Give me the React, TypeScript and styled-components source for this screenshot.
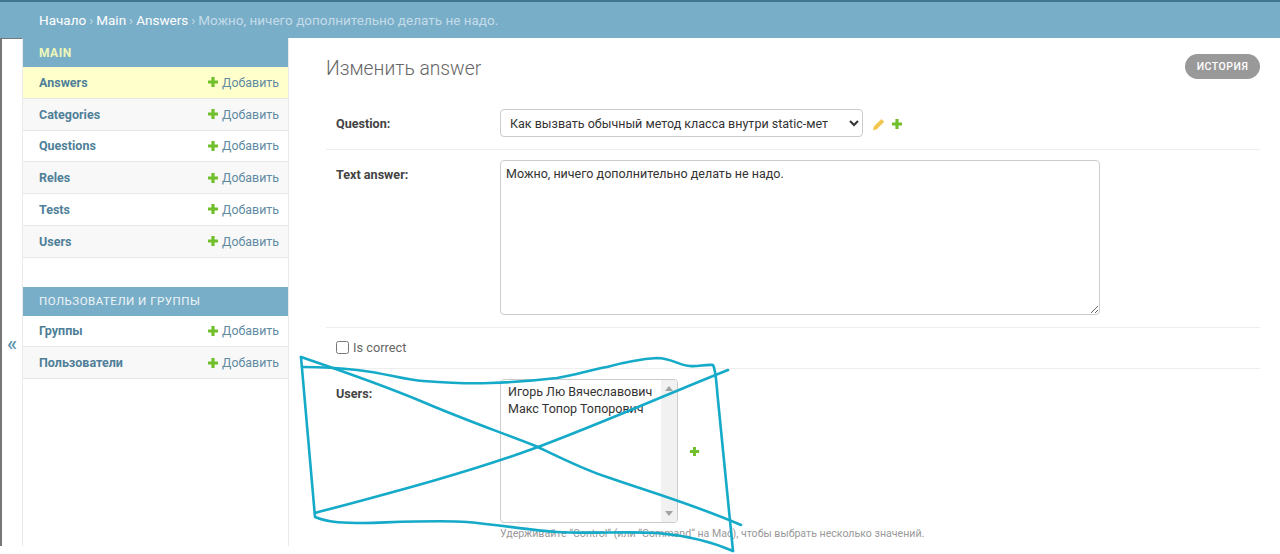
import styled, { createGlobalStyle } from "styled-components"

const GlobalStyle = createGlobalStyle`
  html, body {
    margin: 0;
    padding: 0;
    background: #fff;
    height: 554px;
    overflow: hidden;
  }

  body {
    font-family: Roboto, "Liberation Sans", sans-serif;
    font-size: 14px;
    color: #333;
  }

  * {
    box-sizing: border-box;
  }
`

const Page = styled.div`
  position: relative;
  width: 1280px;
  height: 554px;
  overflow: hidden;
`

const Breadcrumbs = styled.div`
  height: 38px;
  background: #79aec8;
  border-top: 2px solid #417690;
  padding: 0 39px;
  display: flex;
  align-items: center;
  font-size: 13.5px;
  color: #c4dce8;
  white-space: nowrap;

  a {
    color: #fff;
  }

  span {
    margin: 0 3px;
  }
`

const Body = styled.div`
  display: flex;
  height: 508px;
`

const Toggle = styled.div`
  width: 23px;
  flex-shrink: 0;
  border-left: 2px solid #777;
  border-right: 1px solid #eaeaea;
  border-top: 1px solid #777;
  display: flex;
  justify-content: center;
  color: #5d93ad;
  font-size: 21px;
  font-weight: 500;
  line-height: 24px;
  padding-top: 292px;
`

const Nav = styled.div`
  width: 266px;
  flex-shrink: 0;
  border-right: 1px solid #eaeaea;
`

const Module = styled.div`
  margin-bottom: 29px;
`

const Caption = styled.div<{ $highlight?: boolean }>`
  height: 29px;
  background: #79aec8;
  padding: 0 16px;
  display: flex;
  align-items: center;
  font-size: ${props => props.$highlight ? 12 : 11.5}px;
  font-weight: ${props => props.$highlight ? 700 : 400};
  letter-spacing: 0.5px;
  color: ${props => props.$highlight ? "#eef7b8" : "#eef5f8"};
`

const Row = styled.div<{ $bg: string }>`
  height: 31.75px;
  padding: 0 9px 0 16px;
  display: flex;
  align-items: center;
  justify-content: space-between;
  background: ${props => props.$bg};
  border-bottom: 1px solid #e8e8e8;
`

const ModelName = styled.span`
  font-size: 12.5px;
  font-weight: 700;
  color: #4f7f98;
`

const AddLink = styled.span`
  display: flex;
  align-items: center;
  gap: 3px;
  font-size: 12.4px;
  color: #5f8ba2;
`

const Main = styled.div`
  flex-grow: 1;
  padding: 0 20px 0 37px;
`

const TitleBar = styled.div`
  height: 61px;
  display: flex;
  align-items: center;
  justify-content: space-between;
`

const Title = styled.h1`
  margin: 0;
  font-size: 19.3px;
  font-weight: 300;
  color: #666;
`

const History = styled.div`
  width: 75px;
  height: 25px;
  margin-bottom: 4px;
  border-radius: 13px;
  background: #999;
  color: #fff;
  font-size: 10.5px;
  font-weight: 500;
  letter-spacing: 0.5px;
  display: flex;
  align-items: center;
  justify-content: center;
`

const FormRow = styled.div<{ $height: number }>`
  height: ${props => props.$height}px;
  padding: 10px 10px 0 10px;
  display: flex;
  border-bottom: 1px solid #eee;
`

const Label = styled.label`
  width: 164px;
  flex-shrink: 0;
  font-size: 12.6px;
  font-weight: 700;
  color: #444;
  padding-top: 7px;
`

const QuestionSelect = styled.select`
  width: 363px;
  height: 28px;
  border: 1px solid #ccc;
  border-radius: 4px;
  background: #fff;
  font-family: Roboto, sans-serif;
  font-size: 12.5px;
  color: #333;
  padding: 0 18px 0 5px;
`

const IconGroup = styled.div`
  display: flex;
  align-items: center;
  gap: 6px;
  margin-left: 9px;
  height: 30px;
`

const AnswerArea = styled.textarea`
  width: 600px;
  height: 155px;
  border: 1px solid #ccc;
  border-radius: 4px;
  padding: 5px 5px;
  font-family: Roboto, sans-serif;
  font-size: 12.5px;
  color: #333;
  resize: both;
  outline: none;
`

const CheckRow = styled.div`
  height: 41px;
  padding: 0 10px 2px;
  display: flex;
  align-items: center;
  gap: 4px;
  border-bottom: 1px solid #eee;
  font-size: 12.8px;
  color: #666;
`

const Check = styled.input`
  width: 13px;
  height: 13px;
  margin: 0;
`

const UsersRow = styled.div`
  padding: 10px 10px 0;
  display: flex;
`

const UsersField = styled.div`
  display: flex;
  flex-direction: column;
`

const UsersLine = styled.div`
  display: flex;
  align-items: center;
  gap: 11px;
`

const UserList = styled.div`
  width: 178px;
  height: 144px;
  border: 1px solid #ccc;
  border-radius: 4px;
  display: flex;
  justify-content: space-between;
  overflow: hidden;
`

const UserNames = styled.div`
  padding: 4px 7px;
  font-size: 12.5px;
  line-height: 16.5px;
  color: #333;
  white-space: nowrap;
`

const ScrollTrack = styled.div`
  width: 16px;
  background: #f1f1f1;
  display: flex;
  flex-direction: column;
  justify-content: space-between;
  align-items: center;
  padding: 6px 0;
`

const Arrow = styled.div<{ $down?: boolean }>`
  width: 0;
  height: 0;
  border-left: 4px solid transparent;
  border-right: 4px solid transparent;
  border-bottom: ${props => props.$down ? "0" : "5px solid #a3a3a3"};
  border-top: ${props => props.$down ? "5px solid #a3a3a3" : "0"};
`

const Help = styled.div`
  margin-top: 4px;
  font-size: 10.6px;
  color: #999;
  white-space: nowrap;
`

const Scribble = styled.svg`
  position: absolute;
  left: 0;
  top: 0;
  pointer-events: none;
`

const Plus = ({ size = 12 }: { size?: number }) => (
  <svg width={size} height={size} viewBox="0 0 12 12">
    <path d="M4.4 1h3.2v3.4H11v3.2H7.6V11H4.4V7.6H1V4.4h3.4z" fill="#70bf2b" />
  </svg>
)

const Pencil = () => (
  <svg width="13" height="13" viewBox="0 0 13 13">
    <path d="M9.4 1l2.8 2.8-7.6 7.6-3.6.8.8-3.6z" fill="#f3c64f" />
  </svg>
)

const mainModels = ["Answers", "Categories", "Questions", "Reles", "Tests", "Users"]
const authModels = ["Группы", "Пользователи"]

const mainRowBg = (i: number) => i === 0 ? "#ffffcc" : i % 2 === 1 ? "#f8f8f8" : "#fff"
const authRowBg = (i: number) => i % 2 === 0 ? "#fff" : "#f8f8f8"

const App = () => {
  return (
    <Page>
      <GlobalStyle />
      <Breadcrumbs>
        <a>Начало</a><span>›</span><a>Main</a><span>›</span><a>Answers</a><span>›</span>
        Можно, ничего дополнительно делать не надо.
      </Breadcrumbs>
      <Body>
        <Toggle>«</Toggle>
        <Nav>
          <Module>
            <Caption $highlight>MAIN</Caption>
            {mainModels.map((name, i) => (
              <Row key={name} $bg={mainRowBg(i)}>
                <ModelName>{name}</ModelName>
                <AddLink><Plus />Добавить</AddLink>
              </Row>
            ))}
          </Module>
          <Module>
            <Caption>ПОЛЬЗОВАТЕЛИ И ГРУППЫ</Caption>
            {authModels.map((name, i) => (
              <Row key={name} $bg={authRowBg(i)}>
                <ModelName>{name}</ModelName>
                <AddLink><Plus />Добавить</AddLink>
              </Row>
            ))}
          </Module>
        </Nav>
        <Main>
          <TitleBar>
            <Title>Изменить answer</Title>
            <History>ИСТОРИЯ</History>
          </TitleBar>
          <FormRow $height={51}>
            <Label>Question:</Label>
            <QuestionSelect defaultValue="q">
              <option value="q">Как вызвать обычный метод класса внутри static-метода?</option>
            </QuestionSelect>
            <IconGroup>
              <Pencil />
              <Plus />
            </IconGroup>
          </FormRow>
          <FormRow $height={178}>
            <Label>Text answer:</Label>
            <AnswerArea readOnly value="Можно, ничего дополнительно делать не надо." />
          </FormRow>
          <CheckRow>
            <Check type="checkbox" />
            Is correct
          </CheckRow>
          <UsersRow>
            <Label>Users:</Label>
            <UsersField>
              <UsersLine>
                <UserList>
                  <UserNames>
                    <div>Игорь Лю Вячеславович</div>
                    <div>Макс Топор Топорович</div>
                  </UserNames>
                  <ScrollTrack>
                    <Arrow />
                    <Arrow $down />
                  </ScrollTrack>
                </UserList>
                <Plus size={11} />
              </UsersLine>
              <Help>Удерживайте “Control“ (или “Command“ на Mac), чтобы выбрать несколько значений.</Help>
            </UsersField>
          </UsersRow>
        </Main>
      </Body>
      <Scribble width="1280" height="554" viewBox="0 0 1280 554" fill="none" stroke="#14aac8" strokeWidth="2.6" strokeLinecap="round" strokeLinejoin="round">
        <path d="M301 357C345 372 385 386 423 402C465 420 500 432 538 447C565 460 585 470 607 477C650 492 695 505 741 525" />
        <path d="M301 357L315 517C330 523 345 523 365 523C400 522 440 520 467 522C500 525 530 530 557 532C590 534 625 531 657 533C680 535 710 541 733 551" />
        <path d="M302 367C320 367 340 368 357 370C385 373 405 380 423 381C450 383 470 384 490 383C520 382 540 380 557 378C575 375 590 370 607 367C625 362 640 359 657 358C672 358 680 366 690 366C697 367 706 364 713 365C716 370 716 380 718 400L733 551" />
        <path d="M315 513C390 493 470 472 538 447C605 422 665 395 728 370" />
      </Scribble>
    </Page>
  )
}

export default App
